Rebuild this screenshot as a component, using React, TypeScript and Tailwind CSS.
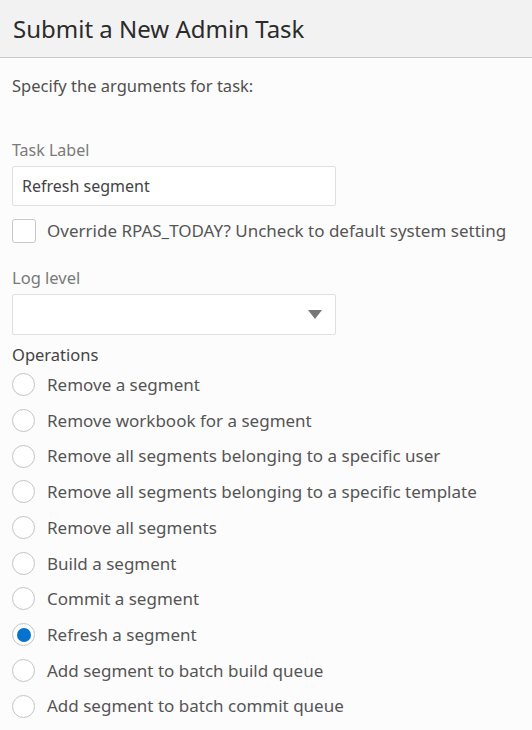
export default function App() {
  const operations = [
    'Remove a segment',
    'Remove workbook for a segment',
    'Remove all segments belonging to a specific user',
    'Remove all segments belonging to a specific template',
    'Remove all segments',
    'Build a segment',
    'Commit a segment',
    'Refresh a segment',
    'Add segment to batch build queue',
    'Add segment to batch commit queue',
  ];
  const selected = 'Refresh a segment';

  return (
    <div className="w-[532px] h-[730px] bg-[#fcfcfc] overflow-hidden font-['Noto_Sans',sans-serif]">
      <header className="h-[58px] bg-[#f2f2f2] border-b border-[#cbcbcb] flex items-center pl-[13px]">
        <h1 className="text-[24px] leading-none text-[#2b2b2b]">Submit a New Admin Task</h1>
      </header>

      <div className="px-3">
        <p className="mt-4 text-[16.5px] leading-6 text-[#505050]">Specify the arguments for task:</p>

        <label className="block mt-10 text-[16px] leading-6 text-[#7a7a7a]">Task Label</label>
        <div className="mt-1 w-[324px] h-10 border border-[#e0e0e0] rounded-[2px] bg-white flex items-center px-[9px] text-[16px] text-[#444]">
          Refresh segment
        </div>

        <div className="mt-[13px] flex items-center h-6">
          <span className="w-6 h-6 border border-[#c9c9c9] rounded-[3px] bg-white shrink-0" />
          <span className="ml-[11px] text-[17px] text-[#555] whitespace-nowrap">
            Override RPAS_TODAY? Uncheck to default system setting
          </span>
        </div>

        <label className="block mt-[23px] text-[16.5px] leading-6 text-[#7a7a7a]">Log level</label>
        <div className="mt-1 w-[324px] h-[41px] border border-[#e0e0e0] rounded-[2px] bg-white flex items-center justify-end pr-[13px]">
          <svg width="14" height="9" viewBox="0 0 14 9">
            <path d="M0 0 H14 L7 9 Z" fill="#777" />
          </svg>
        </div>

        <p className="mt-2 text-[16.5px] leading-6 text-[#444]">Operations</p>

        <div className="flex flex-col">
          {operations.map((op) => (
            <div key={op} className="h-[35.7px] flex items-center">
              <span className="w-[23px] h-[23px] rounded-full border border-[#c4c4c4] bg-white flex items-center justify-center shrink-0">
                {op === selected && <span className="w-[14px] h-[14px] rounded-full bg-[#0572ce]" />}
              </span>
              <span className="ml-[12px] text-[17px] text-[#555] whitespace-nowrap">{op}</span>
            </div>
          ))}
        </div>
      </div>
    </div>
  );
}
